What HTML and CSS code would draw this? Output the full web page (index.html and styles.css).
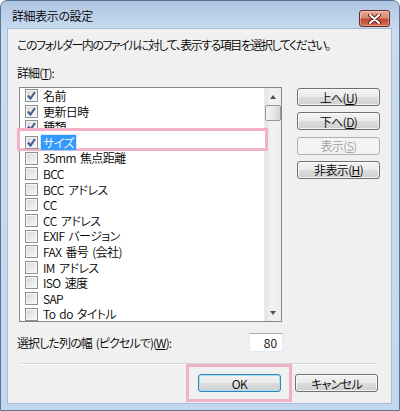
FILE: index.html
```html
<html>
<head>
<meta charset="utf-8">
<link rel="stylesheet" href="styles.css">
</head>
<body>
<div class="window">
  <div class="titlebar">
    <span class="title">詳細表示の設定</span>
    <button class="close" type="button">
      <svg width="13" height="10" viewBox="0 0 13 10">
        <path d="M2 1 L11 9 M11 1 L2 9" stroke="#5a2018" stroke-width="4" stroke-linecap="round"/>
        <path d="M2 1 L11 9 M11 1 L2 9" stroke="#fff" stroke-width="2" stroke-linecap="round"/>
      </svg>
    </button>
  </div>

  <div class="client">
    <p class="intro">このフォルダー内のファイルに対して、表示する項目を選択してください。</p>
    <div class="caption">詳細(<u>T</u>):</div>

    <div class="columns">
      <div class="listbox">
        <ul class="items">
          <li class="item"><span class="check"><svg width="11" height="11" viewBox="0 0 11 11"><path d="M2 5.5 L4.5 8.5 L9 2" fill="none" stroke="#45598a" stroke-width="2"/></svg></span>名前</li>
          <li class="item"><span class="check"><svg width="11" height="11" viewBox="0 0 11 11"><path d="M2 5.5 L4.5 8.5 L9 2" fill="none" stroke="#45598a" stroke-width="2"/></svg></span>更新日時</li>
          <li class="item"><span class="check"><svg width="11" height="11" viewBox="0 0 11 11"><path d="M2 5.5 L4.5 8.5 L9 2" fill="none" stroke="#45598a" stroke-width="2"/></svg></span>種類</li>
          <li class="item marked"><span class="check"><svg width="11" height="11" viewBox="0 0 11 11"><path d="M2 5.5 L4.5 8.5 L9 2" fill="none" stroke="#45598a" stroke-width="2"/></svg></span><span class="selected">サイズ</span></li>
          <li class="item"><span class="check"></span>35mm 焦点距離</li>
          <li class="item"><span class="check"></span>BCC</li>
          <li class="item"><span class="check"></span>BCC アドレス</li>
          <li class="item"><span class="check"></span>CC</li>
          <li class="item"><span class="check"></span>CC アドレス</li>
          <li class="item"><span class="check"></span>EXIF バージョン</li>
          <li class="item"><span class="check"></span>FAX 番号 (会社)</li>
          <li class="item"><span class="check"></span>IM アドレス</li>
          <li class="item"><span class="check"></span>ISO 速度</li>
          <li class="item"><span class="check"></span>SAP</li>
          <li class="item"><span class="check"></span>To do タイトル</li>
        </ul>
        <div class="scrollbar">
          <div class="arrow up"></div>
          <div class="thumb"></div>
          <div class="track"></div>
          <div class="arrow down"></div>
        </div>
      </div>

      <div class="side-buttons">
        <button class="btn" type="button">上へ(<u>U</u>)</button>
        <button class="btn" type="button">下へ(<u>D</u>)</button>
        <button class="btn" type="button" disabled>表示(<u>S</u>)</button>
        <button class="btn" type="button">非表示(<u>H</u>)</button>
      </div>
    </div>

    <div class="width-row">
      <label for="col-width">選択した列の幅 (ピクセルで)(<u>W</u>):</label>
      <input class="width-input" id="col-width" type="text" value="80">
    </div>

    <div class="separator"></div>

    <div class="footer">
      <button class="btn default marked-btn" type="button">OK</button>
      <button class="btn" type="button">キャンセル</button>
    </div>
  </div>
</div>
</body>
</html>
```

FILE: styles.css
```css
body {
  margin: 0;
  background: #ffffff;
  font-family: "Noto Sans CJK JP", "Noto Sans", sans-serif;
  font-size: 12px;
  font-weight: 350;
  letter-spacing: -0.9px;
  word-spacing: 2px;
  font-feature-settings: "palt";
  color: #000;
}

u {
  text-decoration: underline;
  text-underline-offset: 1px;
}

/* window frame */
.window {
  box-sizing: border-box;
  width: 400px;
  height: 411px;
  border: 1px solid #5d7390;
  border-radius: 7px 7px 0 0;
  padding: 0 8px 7px 7px;
  background: linear-gradient(#aec5e2, #c8dbf0 28px, #c3d8ef);
  display: flex;
  flex-direction: column;
}

.titlebar {
  height: 28px;
  flex: none;
  display: flex;
  align-items: flex-start;
}

.title {
  padding: 7px 0 0 4px;
  line-height: 16px;
  letter-spacing: -0.4px;
}

.close {
  margin: 9px 1px 0 auto;
  width: 31px;
  height: 17px;
  padding: 0;
  border: 1px solid #6b2a22;
  border-radius: 3px;
  background: linear-gradient(#e9a99a, #d88a78 45%, #c24a35 55%, #d06a4e);
  box-shadow: inset 0 0 0 1px rgba(255, 255, 255, 0.35);
  display: flex;
  align-items: center;
  justify-content: center;
}

/* dialog body */
.client {
  flex: 1;
  background: #f0f0f0;
  box-shadow: 0 0 0 1px #a8bcd6;
  padding: 0 0 0 9px;
  display: flex;
  flex-direction: column;
}

.intro {
  margin: 8px 0 0;
  line-height: 16px;
  letter-spacing: -1.5px;
}

.caption {
  margin-top: 12px;
  line-height: 16px;
}

.columns {
  margin-top: 6px;
  display: flex;
  align-items: flex-start;
}

.listbox {
  margin-left: 2px;
  width: 263px;
  height: 235px;
  box-sizing: border-box;
  border: 1px solid #828790;
  background: #fff;
  display: flex;
}

.items {
  list-style: none;
  margin: 0;
  padding: 0;
  flex: 1;
}

.item {
  height: 15.6px;
  line-height: 15.6px;
  padding-left: 5px;
  display: flex;
  align-items: center;
  white-space: pre;
  letter-spacing: -0.6px;
}

.check {
  box-sizing: border-box;
  width: 13px;
  height: 13px;
  margin-right: 5px;
  border: 1px solid #8f8f8f;
  background: linear-gradient(135deg, #d6d8dc, #f8f8f8);
  box-shadow: inset 0 0 0 1px #f6f6f6;
  display: flex;
  align-items: center;
  justify-content: center;
  flex: none;
}

.check svg {
  display: block;
}

/* highlighted row with the pink frame drawn over the list */
.item.marked {
  position: relative;
  z-index: 1;
}

.item.marked::before {
  content: "";
  position: absolute;
  top: -7px;
  bottom: -1px;
  left: -3px;
  right: -4px;
  border: 3px solid #f2b0cb;
  background: #fff;
  z-index: -1;
}

.selected {
  margin-left: -2px;
  padding: 0 2px;
  background: #3399ff;
  color: #fff;
  line-height: 15px;
  outline: 1px dotted #a8d0f8;
}

.scrollbar {
  width: 17px;
  flex: none;
  display: flex;
  flex-direction: column;
  background: linear-gradient(90deg, #e4e4e4, #f2f2f2 40%, #eeeeee);
  border-left: 1px solid #ececec;
  box-sizing: border-box;
}

.arrow {
  height: 17px;
  flex: none;
  display: flex;
  align-items: center;
  justify-content: center;
}

.arrow::after {
  content: "";
  border-left: 3.5px solid transparent;
  border-right: 3.5px solid transparent;
}

.arrow.up::after {
  border-bottom: 4px solid #505050;
}

.arrow.down::after {
  border-top: 4px solid #505050;
}

.thumb {
  height: 16px;
  box-sizing: border-box;
  border: 1px solid #979797;
  border-radius: 2px;
  background: linear-gradient(90deg, #f4f4f4, #e8e8e8 50%, #d6d6d6);
}

.track {
  flex: 1;
}

.side-buttons {
  margin: 1px 0 0 15px;
  display: flex;
  flex-direction: column;
  gap: 6.3px;
}

.btn {
  box-sizing: border-box;
  width: 83px;
  height: 18px;
  padding: 0;
  border: 1px solid #707070;
  border-radius: 3px;
  background: linear-gradient(#f2f2f2, #ebebeb 50%, #dddddd 50%, #cfcfcf);
  box-shadow: inset 0 0 0 1px rgba(255, 255, 255, 0.7);
  font: inherit;
  letter-spacing: -0.6px;
  line-height: 15px;
  color: #000;
}

.btn:disabled {
  border-color: #adb2b5;
  background: #f4f4f4;
  box-shadow: none;
  color: #a0a0a0;
}

.btn.default {
  border-color: #3c7fb1;
  box-shadow: inset 0 0 0 1px #9fe3fb;
}

.width-row {
  margin-top: 11px;
  width: 266px;
  height: 19px;
  display: flex;
  align-items: center;
  justify-content: space-between;
}

.width-input {
  box-sizing: border-box;
  width: 34px;
  height: 19px;
  border: 1px solid #e3e9ef;
  border-top-color: #abadb3;
  background: #fff;
  font: inherit;
  text-align: right;
  padding: 0 5px 0 0;
}

.separator {
  margin: 11px 0 0 2px;
  width: 358px;
  height: 1px;
  background: #d7d7d7;
  border-bottom: 1px solid #fff;
}

.footer {
  margin-top: 9px;
  padding-right: 13px;
  display: flex;
  justify-content: flex-end;
  gap: 14px;
}

/* pink frame around the OK button */
.marked-btn {
  position: relative;
}

.marked-btn::after {
  content: "";
  position: absolute;
  top: -11px;
  bottom: -11px;
  left: -13px;
  right: -12px;
  border: 3px solid #f2b0cb;
}
```
